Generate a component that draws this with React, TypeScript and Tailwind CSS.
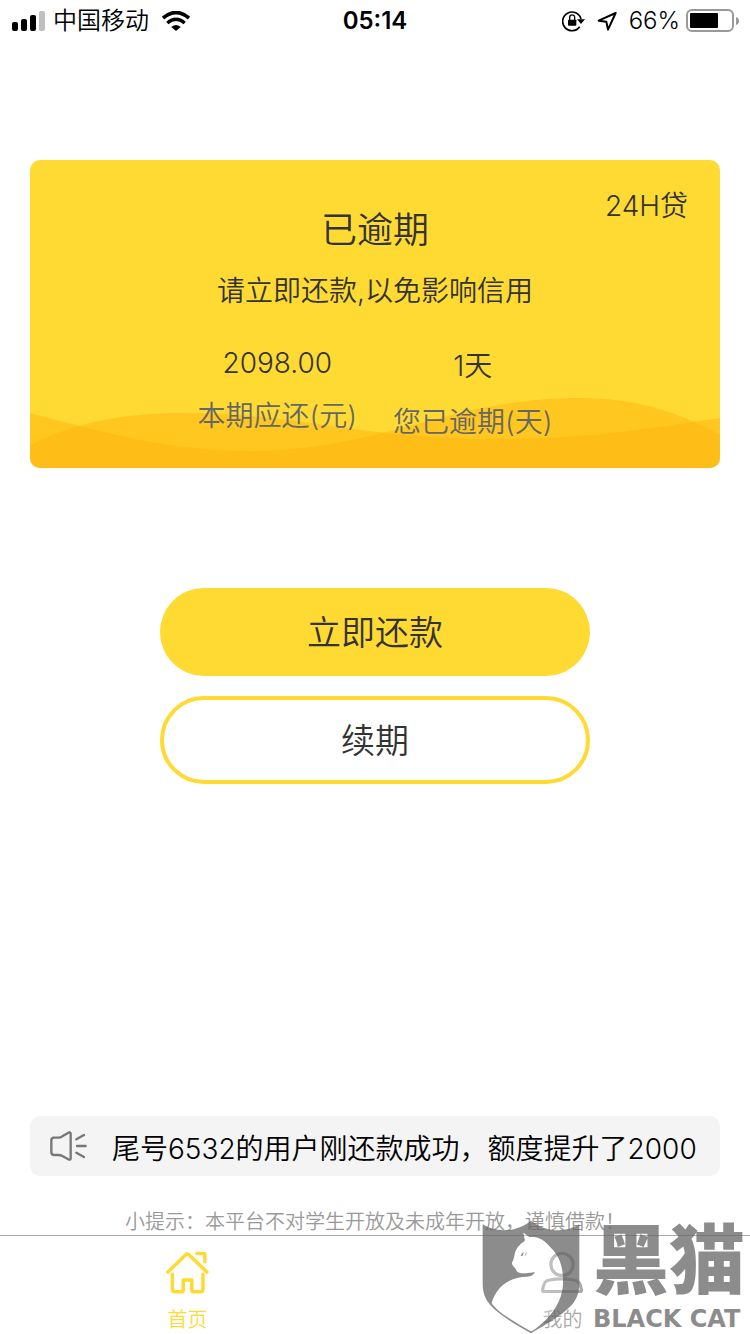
import type { ReactNode } from "react";

const stats = [
  { value: "2098.00", label: "本期应还(元)", valueClass: "leading-[50px]" },
  { value: "1天", label: "您已逾期(天)", valueClass: "leading-[56px]" }
];

function SignalIcon() {
  return (
    <svg width="34" height="22" viewBox="0 0 34 22" aria-hidden="true">
      <rect x="0" y="12" width="6" height="9" rx="2" />
      <rect x="9" y="9" width="6" height="12" rx="2" />
      <rect x="18" y="5" width="6" height="16" rx="2" />
      <rect x="27" y="1" width="6" height="20" rx="2" fill="#bfbfbf" />
    </svg>
  );
}

function WifiIcon() {
  return (
    <svg width="28" height="20" viewBox="0 0 84 60" aria-hidden="true">
      <path d="M3 21 Q42 -12 81 21" fill="none" stroke="#000" strokeWidth="11" />
      <path d="M16 36 Q42 14 68 36" fill="none" stroke="#000" strokeWidth="10" />
      <path d="M28 48 Q42 36 56 48 L42 60 Z" />
    </svg>
  );
}

function RotationLockIcon() {
  return (
    <svg width="23" height="22" viewBox="0 0 69 66" aria-hidden="true">
      <path d="M53 50 A28 28 0 1 1 57 27" fill="none" stroke="#000" strokeWidth="5" />
      <path d="M45 28 H69 L57 42 Z" />
      <rect x="18" y="29" width="25" height="18" rx="2" />
      <path d="M23 30 V22 a7 7 0 0 1 15 0 V30" fill="none" stroke="#000" strokeWidth="4" />
    </svg>
  );
}

function LocationIcon() {
  return (
    <svg width="20" height="20" viewBox="0 0 60 60" aria-hidden="true">
      <path
        d="M56 6 L5 29 L28 32 L33 56 Z"
        fill="none"
        stroke="#000"
        strokeWidth="6"
        strokeLinejoin="round"
      />
    </svg>
  );
}

function BatteryIcon() {
  return (
    <svg width="54" height="24" viewBox="0 0 54 24" aria-hidden="true">
      <rect x="1" y="1" width="46" height="21" rx="5" fill="none" stroke="#999" strokeWidth="2" />
      <rect x="4" y="4" width="28" height="15" rx="1" />
      <path d="M50 8 Q53 9 53 12 Q53 15 50 16 Z" fill="#999" />
    </svg>
  );
}

function StatusBar() {
  return (
    <header className="grid h-10 grid-cols-[1fr_auto_1fr] items-center px-3 pt-px text-2xl text-black">
      <div className="flex items-center">
        <SignalIcon />
        <span className="ml-[7px]">中国移动</span>
        <span className="ml-[13px]">
          <WifiIcon />
        </span>
      </div>
      <time className="font-semibold">05:14</time>
      <div className="flex items-center justify-end">
        <RotationLockIcon />
        <span className="ml-3">
          <LocationIcon />
        </span>
        <span className="ml-3">66%</span>
        <span className="-mr-0.5 ml-1.5">
          <BatteryIcon />
        </span>
      </div>
    </header>
  );
}

function CardWaves() {
  return (
    <svg
      className="absolute inset-x-0 bottom-0 h-[70px] w-full"
      viewBox="0 0 690 70"
      preserveAspectRatio="none"
      aria-hidden="true"
    >
      <path
        d="M0 47 C50 22 100 15 155 15 C270 15 330 41 465 41 C560 41 620 30 690 20 V70 H0 Z"
        fill="#ffb40d"
        fillOpacity="0.5"
      />
      <path
        d="M0 15 C60 30 130 53 220 53 C350 53 420 0 550 0 C610 0 655 17 690 37 V70 H0 Z"
        fill="#ffb40d"
        fillOpacity="0.5"
      />
    </svg>
  );
}

function OverdueCard() {
  return (
    <section className="relative mx-[30px] overflow-hidden rounded-[10px] bg-[#ffda33] pt-[25px] pb-[18px] text-[#333]">
      <CardWaves />
      <div className="relative">
        <div className="grid grid-cols-[1fr_auto_1fr] items-start">
          <h1 className="col-start-2 mt-5 text-4xl/[50px]">已逾期</h1>
          <span className="mr-8 text-right text-[28px]/[42px]">24H贷</span>
        </div>
        <p className="mt-[15px] text-center text-[28px]/[42px]">请立即还款,以免影响信用</p>
        <dl className="mt-[26px] flex justify-center gap-9 text-center text-[28px]">
          {stats.map((item) => (
            <div key={item.label} className="flex flex-col-reverse justify-end">
              <dt className="leading-[56px] text-[#666]">{item.label}</dt>
              <dd className={item.valueClass}>{item.value}</dd>
            </div>
          ))}
        </dl>
      </div>
    </section>
  );
}

function Notice() {
  return (
    <div className="mx-[30px] flex h-[60px] items-center overflow-hidden rounded-[10px] bg-[#f4f4f4] pl-5">
      <svg
        width="37"
        height="30"
        viewBox="0 0 111 90"
        fill="none"
        stroke="#777"
        strokeWidth="7"
        strokeLinecap="round"
        strokeLinejoin="round"
        className="shrink-0"
        aria-hidden="true"
      >
        <path d="M9 20 H25 Q32 20 37 16 L55 5 Q62 2 62 9 V82 Q62 88 55 85 L37 75 Q32 72 25 72 H12 Q4 72 4 63 V29 Q4 20 12 20" />
        <path d="M79 25 L102 12 M81 45 H107 M79 65 L102 78" />
      </svg>
      <p className="ml-[25px] pt-1.5 text-[28px] whitespace-nowrap text-black">
        尾号6532的用户刚还款成功，额度提升了2000
      </p>
    </div>
  );
}

function HomeIcon() {
  return (
    <svg
      width="46"
      height="46"
      viewBox="0 0 138 138"
      fill="none"
      stroke="currentColor"
      strokeWidth="11"
      strokeLinecap="round"
      strokeLinejoin="round"
      aria-hidden="true"
    >
      <path d="M6 66 L62 12 Q67 7 72 12 L128 66" />
      <path d="M97 8 H117 Q122 8 122 13 V34" />
      <path d="M20 73 V119 Q20 128 29 128 H48 Q54 128 54 122 V91 H81 V122 Q81 128 87 128 H107 Q116 128 116 119 V73" />
    </svg>
  );
}

function UserIcon() {
  return (
    <svg
      width="46"
      height="46"
      viewBox="0 0 138 138"
      fill="none"
      stroke="currentColor"
      strokeWidth="10"
      strokeLinejoin="round"
      aria-hidden="true"
    >
      <circle cx="66" cy="42" r="35" />
      <path d="M5 122 Q9 91 27 91 Q64 84 104 91 Q123 93 127 122 Q127 127 122 127 H10 Q5 127 5 122 Z" />
    </svg>
  );
}

function Tab({ href, label, className, children }: { href: string; label: string; className: string; children: ReactNode }) {
  return (
    <a href={href} className={`flex flex-1 flex-col items-center pt-[15px] text-xl/[28px] ${className}`}>
      {children}
      <span className="mt-[11px]">{label}</span>
    </a>
  );
}

function Watermark() {
  return (
    <div
      className="pointer-events-none absolute right-0 bottom-0 flex items-end text-[#686667] opacity-75"
      aria-hidden="true"
    >
      <svg width="100" height="114" viewBox="0 0 300 342">
        <path
          d="M5 13 C45 39 105 38 150 2 C195 38 255 39 295 13 V190 C295 250 262 275 150 340 C38 275 5 250 5 190 Z M127 38 L146 52 C172 48 190 62 207 81 C240 112 247 150 246 190 C244 245 210 295 158 330 L150 334 C95 302 48 275 32 249 C48 195 90 170 140 170 C152 169 159 164 162 156 C140 159 115 164 107 153 C105 143 92 138 93 128 C103 112 98 96 111 81 C122 68 130 66 132 61 Z"
          fill="#686667"
          fillRule="evenodd"
        />
        <path
          d="M127 38 L146 52 C172 48 190 62 207 81 C240 112 247 150 246 190 C244 245 210 295 158 330 L150 334 C95 302 48 275 32 249 C48 195 90 170 140 170 C152 169 159 164 162 156 C140 159 115 164 107 153 C105 143 92 138 93 128 C103 112 98 96 111 81 C122 68 130 66 132 61 Z"
          fill="#fff"
          fillOpacity="0.35"
        />
        <path d="M119 107 Q122 98 129 96 L124 109 Z M131 108 L136 95 Q138 104 131 108 Z" fill="#686667" />
      </svg>
      <div className="ml-3 w-[157px] whitespace-nowrap">
        <div className="mb-1.5 text-[76px]/[76px] font-black">黑猫</div>
        <div className="font-['DejaVu_Sans',sans-serif] text-2xl/[30px] font-bold">BLACK CAT</div>
      </div>
    </div>
  );
}

export default function App() {
  return (
    <div className="relative flex min-h-screen flex-col overflow-hidden bg-white font-['Inter','Noto_Sans_CJK_SC',sans-serif] font-[350]">
      <StatusBar />
      <main className="flex flex-1 flex-col pt-[120px]">
        <OverdueCard />
        <div className="mx-40 mt-[120px] flex flex-col gap-5 text-[34px] text-[#333]">
          <button type="button" className="h-[88px] rounded-full bg-[#ffda33]">
            立即还款
          </button>
          <button type="button" className="h-[88px] rounded-full border-4 border-[#ffda33] bg-white">
            续期
          </button>
        </div>
        <div className="mt-auto">
          <Notice />
          <p className="mt-[33px] text-center text-xl/[26px] text-[#999]">
            小提示：本平台不对学生开放及未成年开放，谨慎借款！
          </p>
        </div>
      </main>
      <nav className="flex h-[99px] border-t border-[#aaa]">
        <Tab href="#home" label="首页" className="text-[#ffda33]">
          <HomeIcon />
        </Tab>
        <Tab href="#me" label="我的" className="text-[#aaa]">
          <UserIcon />
        </Tab>
      </nav>
      <Watermark />
    </div>
  );
}
